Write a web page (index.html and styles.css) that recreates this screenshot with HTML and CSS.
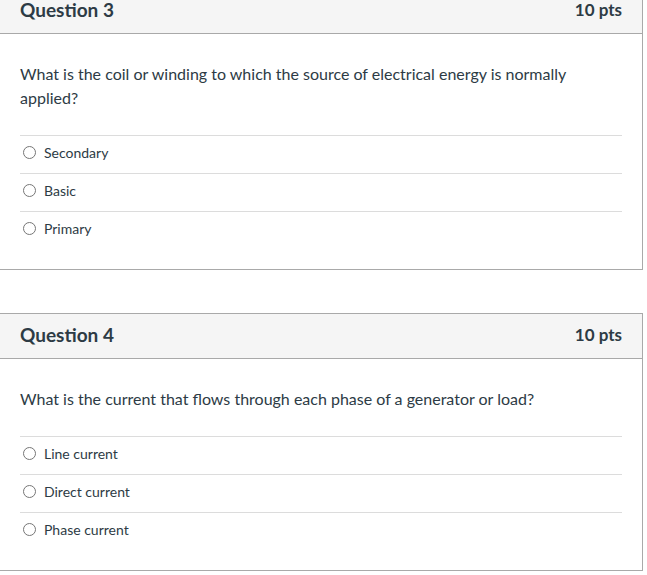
FILE: index.html
```html
<!DOCTYPE html>
<html>
<head>
<meta charset="utf-8">
<link rel="stylesheet" href="styles.css">
</head>
<body>
<div class="page">
  <div class="question first">
    <div class="header">
      <span class="name">Question 3</span>
      <span class="pts">10 pts</span>
    </div>
    <div class="content">
      <div class="text">What is the coil or winding to which the source of electrical energy is normally applied?</div>
      <div class="answers">
        <label class="answer"><span class="radio"></span><span>Secondary</span></label>
        <label class="answer"><span class="radio"></span><span>Basic</span></label>
        <label class="answer"><span class="radio"></span><span>Primary</span></label>
      </div>
    </div>
  </div>
  <div class="question">
    <div class="header">
      <span class="name">Question 4</span>
      <span class="pts">10 pts</span>
    </div>
    <div class="content">
      <div class="text">What is the current that flows through each phase of a generator or load?</div>
      <div class="answers">
        <label class="answer"><span class="radio"></span><span>Line current</span></label>
        <label class="answer"><span class="radio"></span><span>Direct current</span></label>
        <label class="answer"><span class="radio"></span><span>Phase current</span></label>
      </div>
    </div>
  </div>
</div>
</body>
</html>
```
FILE: styles.css
```css
html, body {
  margin: 0;
  padding: 0;
  background: #fff;
  overflow: hidden;
}
body {
  font-family: Lato, "Open Sans", sans-serif;
  color: #2d3b45;
}
.page {
  display: flex;
  flex-direction: column;
  gap: 43px;
  margin-top: -12px;
  margin-left: -1px;
  width: 644px;
}
.question {
  border: 1px solid #a9a9a9;
  background: #fff;
}
.header {
  height: 45px;
  box-sizing: border-box;
  background: #f5f5f5;
  border-bottom: 1px solid #a9a9a9;
  display: flex;
  align-items: center;
  justify-content: space-between;
  padding: 0 20px 4px;
}
.name {
  font-size: 19px;
  font-weight: bold;
}
.pts {
  font-size: 17px;
  font-weight: bold;
}
.content {
  padding: 28px 20px 20px;
}
.text {
  font-size: 16px;
  line-height: 24px;
  padding-right: 40px;
}
.answers {
  margin-top: 25px;
  display: flex;
  flex-direction: column;
}
.answer {
  display: flex;
  align-items: center;
  height: 38px;
  box-sizing: border-box;
  border-top: 1px solid #dcdcdc;
  font-size: 14px;
  padding-left: 3px;
  padding-bottom: 5px;
  gap: 8px;
}
.radio {
  width: 11px;
  height: 11px;
  border: 1px solid #767676;
  border-radius: 50%;
  flex: none;
}
```
